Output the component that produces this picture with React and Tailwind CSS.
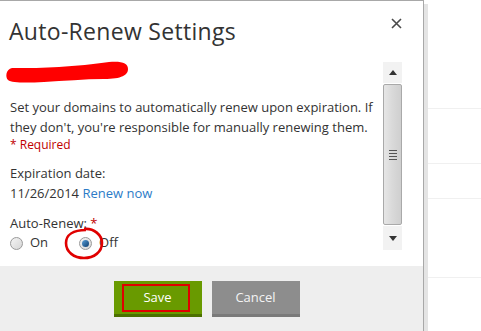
import React from 'react'

const font = { fontFamily: '"Open Sans", "Noto Sans", sans-serif' }

function Radio({ checked }) {
  return (
    <span className="relative inline-flex h-[13px] w-[13px] items-center justify-center rounded-full border border-[#9a9a9a] bg-gradient-to-br from-[#f4f4f4] to-[#d6d6d6]">
      {checked && (
        <span className="h-[7px] w-[7px] rounded-full bg-gradient-to-br from-[#5aa0d8] to-[#0c3f70]" />
      )}
    </span>
  )
}

function Scrollbar() {
  return (
    <div className="flex w-[19px] flex-col mt-[2px] h-[188px]">
      <div className="flex h-[21px] items-center justify-center bg-[#f2f2f2]">
        <svg width="8" height="5" viewBox="0 0 8 5"><path d="M0 5 L4 0 L8 5 Z" fill="#333" /></svg>
      </div>
      <div className="flex flex-1 items-center justify-center rounded-[2px] border border-[#a9a9a9] bg-gradient-to-r from-[#e6e6e6] via-[#d9d9d9] to-[#cfcfcf] mt-[1px]">
        <div className="flex flex-col gap-[2px]">
          <span className="block h-[1px] w-[8px] bg-[#555]" />
          <span className="block h-[1px] w-[8px] bg-[#555]" />
          <span className="block h-[1px] w-[8px] bg-[#555]" />
          <span className="block h-[1px] w-[8px] bg-[#555]" />
        </div>
      </div>
      <div className="flex h-[24px] items-center justify-center bg-[#f2f2f2] mt-[1px]">
        <svg width="8" height="5" viewBox="0 0 8 5"><path d="M0 0 L8 0 L4 5 Z" fill="#333" /></svg>
      </div>
    </div>
  )
}

export default function App() {
  return (
    <div className="flex h-[331px] w-[481px] overflow-hidden bg-white" style={font}>
      {/* Dialog */}
      <div className="relative flex w-[424px] flex-col border-t border-r border-[#a8a8a8] bg-white">
        {/* Header */}
        <div className="relative h-[59px] shrink-0">
          <h1 className="pl-[9px] pt-[15px] text-[23px] leading-[30px] tracking-[0.3px] font-normal text-[#333]">Auto-Renew Settings</h1>
          <svg className="absolute left-[391px] top-[17px]" width="11" height="11" viewBox="0 0 11 11">
            <path d="M1 1 L10 10 M10 1 L1 10" stroke="#4a4a4a" strokeWidth="1.6" />
          </svg>
        </div>

        {/* Body */}
        <div className="flex h-[206px] shrink-0 pr-[21px]">
          <div className="relative flex-1 pl-[10px] text-[13px] text-[#333]">
            <svg className="absolute left-[4px] top-[1px]" width="126" height="23" viewBox="0 0 126 23">
              <path d="M8 7 C25 7 40 7 55 6 C72 5 90 3 105 1 C118 0 124 2 124 8 C124 14 118 18 100 18 C80 18 60 20 40 21 C22 22 8 22 4 19 C1 16 2 8 8 7 Z" fill="#ff0000" />
            </svg>
            <div className="pt-[37px] leading-[20px] whitespace-nowrap">
              <div>Set your domains to automatically renew upon expiration. If</div>
              <div>they don't, you're responsible for manually renewing them.</div>
            </div>
            <div className="text-[12px] leading-[16px] text-[#c00000]">* Required</div>
            <div className="pt-[10px] leading-[20px]">Expiration date:</div>
            <div className="leading-[20px]">
              11/26/2014 <span className="text-[#2c7bc7]">Renew now</span>
            </div>
            <div className="pt-[10px] leading-[20px]">
              Auto-Renew: <span className="text-[#c00000]">*</span>
            </div>
            <div className="relative flex h-[20px] items-center">
              <Radio />
              <span className="ml-[7px]">On</span>
              <span className="ml-[31px]"><Radio checked /></span>
              <span className="ml-[7px]">Off</span>
              <svg className="absolute left-[54px] top-[-6px]" width="40" height="33" viewBox="0 0 40 33">
                <path d="M20 2 C30 1 38 8 38 16 C38 25 30 31 20 31 C10 31 2 25 2 16 C2 8 9 3 22 3" fill="none" stroke="#e00000" strokeWidth="2.6" />
              </svg>
            </div>
          </div>
          <Scrollbar />
        </div>

        {/* Footer */}
        <div className="flex flex-1 justify-center gap-[10px] bg-[#eeeeee] pt-[15px] pr-[10px]">
          <button className="relative flex h-[36px] w-[88px] items-center justify-center border-b-[3px] border-[#4c7000] bg-[#699a00] text-[13px] text-white">
            <span className="absolute left-[8px] top-[3px] h-[28px] w-[68px] border-[2.5px] border-[#e00000]" />
            Save
          </button>
          <button className="flex h-[36px] w-[88px] items-center justify-center border-b-[3px] border-[#7a7a7a] bg-[#8d8d8d] text-[13px] text-[#f4f4f4]">
            Cancel
          </button>
        </div>
      </div>

      {/* Shadow strip */}
      <div className="mt-[4px] w-[4px] bg-[#e4e4e4]" />

      {/* Background page */}
      <div className="flex flex-1 flex-col">
        <div className="h-[109px] border-b border-[#f0f0f0]" />
        <div className="h-[55px] border-b border-[#f0f0f0]" />
        <div className="h-[35px] border-b border-[#f0f0f0]" />
        <div className="h-[79px] border-b border-[#f0f0f0]" />
        <div className="flex-1" />
      </div>
    </div>
  )
}
